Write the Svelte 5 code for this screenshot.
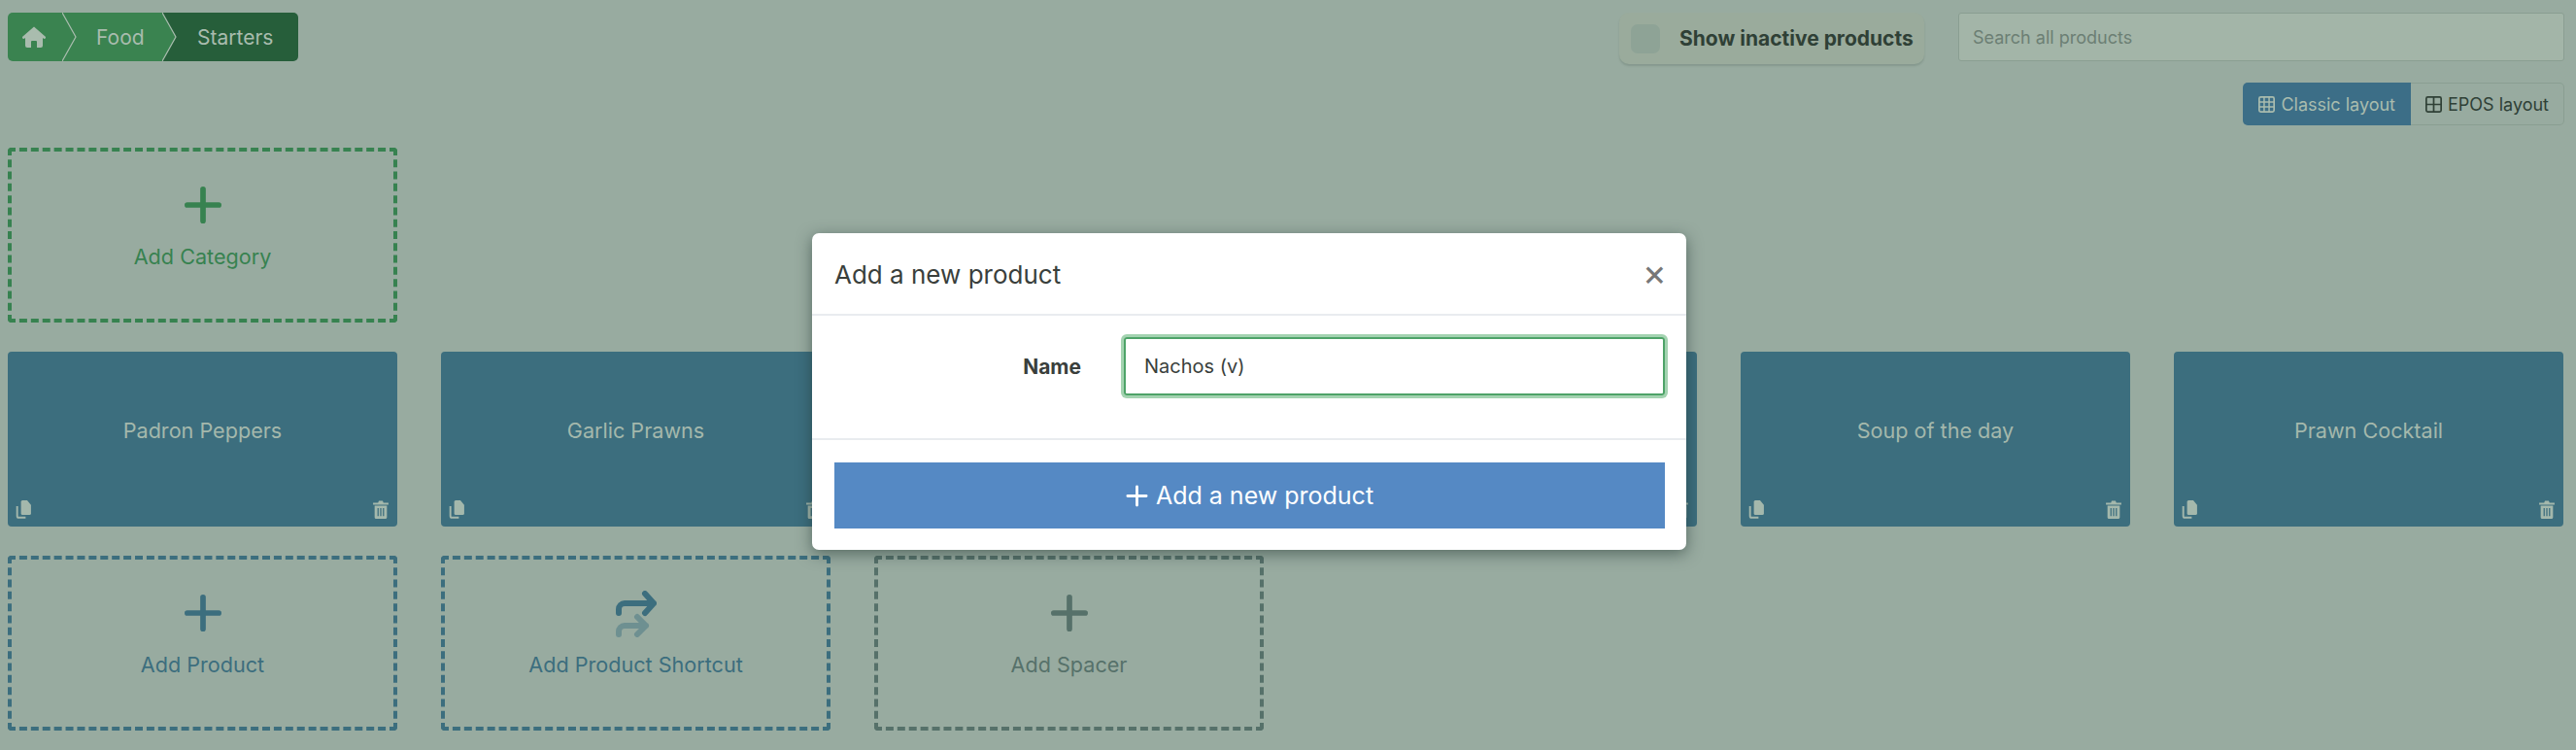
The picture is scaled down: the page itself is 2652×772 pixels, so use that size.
<script>
  const products = ["Padron Peppers", "Garlic Prawns", "", "", "Soup of the day", "Prawn Cocktail"];
</script>

{#snippet plus()}
  <svg class="big-icon" viewBox="0 0 40 40" aria-hidden="true">
    <path d="M20 3v34M3 20h34" fill="none" stroke="currentColor" stroke-width="6" stroke-linecap="round" />
  </svg>
{/snippet}

{#snippet grid(cols)}
  <svg class="grid-icon" viewBox="0 0 16 16" aria-hidden="true">
    <rect x="0.8" y="0.8" width="14.4" height="14.4" rx="1.5" fill="none" stroke="currentColor" stroke-width="1.6" />
    {#if cols === 3}
      <path d="M5.6 1v14M10.4 1v14M1 5.6h14M1 10.4h14" stroke="currentColor" stroke-width="1.4" />
    {:else}
      <path d="M8 1v14M1 8h14" stroke="currentColor" stroke-width="1.6" />
    {/if}
  </svg>
{/snippet}

<div class="page">
  <div class="top">
    <nav class="crumbs">
      <div class="crumb home">
        <svg class="home-icon" viewBox="0 0 24 22" aria-hidden="true">
          <path fill="currentColor" d="M12 .5L23.5 10.500a1.300 1.300 0 0 1-1.800 2L21 12v8a2 2 0 0 1-2 2h-4v-6a1 1 0 0 0-1-1h-4a1 1 0 0 0-1 1v6H5a2 2 0 0 1-2-2v-8l-.7.5a1.300 1.300 0 0 1-1.800-2z" />
        </svg>
        <svg class="chevron" viewBox="0 0 15 50" aria-hidden="true">
          <path d="M0 0L14 25L0 50Z" fill="#3a8350" />
          <path d="M0 0L14 25L0 50" fill="none" stroke="#a9bcae" stroke-width="1.2" />
        </svg>
      </div>
      <div class="crumb food">
        Food
        <svg class="chevron" viewBox="0 0 15 50" aria-hidden="true">
          <path d="M0 0L14 25L0 50Z" fill="#3a8350" />
          <path d="M0 0L14 25L0 50" fill="none" stroke="#a9bcae" stroke-width="1.2" />
        </svg>
      </div>
      <div class="crumb current">Starters</div>
    </nav>

    <div class="filters">
      <label class="inactive">
        <span class="check"></span>
        <span>Show inactive products</span>
      </label>
      <div class="search">Search all products</div>
    </div>
  </div>

  <div class="layouts">
    <button class="active">{@render grid(3)} Classic layout</button>
    <button>{@render grid(2)} EPOS layout</button>
  </div>

  <div class="grid category-row">
    <div class="add green">
      {@render plus()}
      <span>Add Category</span>
    </div>
  </div>

  <div class="grid product-row">
    {#each products as name}
      <div class="tile">
        <span class="tile-name">{name}</span>
        <div class="tile-tools">
          <svg viewBox="0 0 20 24" aria-hidden="true">
            <path fill="currentColor" d="M9 0h6l5 6v11a2 2 0 0 1-2 2H9a2 2 0 0 1-2-2V2a2 2 0 0 1 2-2z" />
            <path fill="none" stroke="currentColor" stroke-width="2.4" d="M2 7.5v13a2 2 0 0 0 2 2h9" />
          </svg>
          <svg viewBox="0 0 20 24" aria-hidden="true">
            <path fill="currentColor" d="M0 3h6.5l1-2.5h5l1 2.500H20v2.600H0zM2 7h16v15a2 2 0 0 1-2 2H4a2 2 0 0 1-2-2z" />
            <path d="M6.500 10v10.500M10 10v10.500M13.500 10v10.500" stroke="#3c6e7e" stroke-width="1.600" />
          </svg>
        </div>
      </div>
    {/each}
  </div>

  <div class="grid add-row">
    <div class="add blue">
      {@render plus()}
      <span>Add Product</span>
    </div>
    <div class="add blue">
      <svg class="shortcut" viewBox="0 0 42 48" aria-hidden="true">
        <path d="M3 23v-4a6 6 0 0 1 6-6h30M30 3l9 10-9 10" fill="none" stroke="currentColor" stroke-width="6" stroke-linecap="round" stroke-linejoin="round" />
        <path d="M3 45v-3a6 6 0 0 1 6-6h22M22 27l9 9-9 9" fill="none" stroke="currentColor" stroke-opacity="0.45" stroke-width="6" stroke-linecap="round" stroke-linejoin="round" />
      </svg>
      <span>Add Product Shortcut</span>
    </div>
    <div class="add grey">
      {@render plus()}
      <span>Add Spacer</span>
    </div>
  </div>
</div>

<div class="modal">
  <header>
    <h2>Add a new product</h2>
    <span class="close">×</span>
  </header>
  <div class="modal-body">
    <span class="field-label">Name</span>
    <div class="field">Nachos (v)</div>
  </div>
  <footer>
    <button class="submit">
      <svg viewBox="0 0 24 24" aria-hidden="true">
        <path d="M12 2v20M2 12h20" fill="none" stroke="currentColor" stroke-width="3" stroke-linecap="round" />
      </svg>
      Add a new product
    </button>
  </footer>
</div>

<style>
  :global(body) {
    background: #98aba0;
    font-family: Inter, "Liberation Sans", sans-serif;
    overflow: hidden;
  }

  .page {
    height: 772px;
    padding: 13px 12px 0 8px;
    box-sizing: border-box;
  }

  .top {
    display: flex;
    justify-content: space-between;
    align-items: flex-start;
  }

  .crumbs {
    display: flex;
    width: 299px;
    height: 50px;
    font-size: 21px;
    color: #a9bcae;
  }

  .crumb {
    position: relative;
    display: flex;
    align-items: center;
    box-sizing: border-box;
    background: #3a8350;
  }

  .home {
    width: 56px;
    padding-left: 15px;
    border-radius: 5px 0 0 5px;
  }

  .home-icon {
    width: 24px;
    height: 22px;
  }

  .food {
    width: 103px;
    padding-left: 35px;
  }

  .current {
    width: 140px;
    padding-left: 36px;
    background: #265e3a;
    border-radius: 0 5px 5px 0;
  }

  .chevron {
    position: absolute;
    left: 100%;
    top: 0;
    width: 15px;
    height: 50px;
    z-index: 1;
  }

  .filters {
    display: flex;
    gap: 35px;
  }

  .inactive {
    display: flex;
    align-items: center;
    gap: 20px;
    width: 314px;
    height: 53px;
    padding-left: 12px;
    box-sizing: border-box;
    background: #9aab9c;
    border-radius: 10px;
    box-shadow: 0 2px 2px rgba(60, 80, 70, 0.2);
    font-size: 21px;
    font-weight: 700;
    color: #2f4036;
  }

  .check {
    width: 30px;
    height: 30px;
    border-radius: 7px;
    background: #8ea396;
  }

  .search {
    display: flex;
    align-items: center;
    width: 624px;
    height: 50px;
    padding-left: 14px;
    box-sizing: border-box;
    background: #a3b5a8;
    border: 1px solid #8a9e92;
    border-radius: 3px;
    font-size: 18px;
    color: #6c7f74;
  }

  .layouts {
    display: flex;
    justify-content: flex-end;
    margin-top: 19px;
  }

  .layouts button {
    display: flex;
    align-items: center;
    gap: 6px;
    height: 44px;
    padding: 0 15px;
    background: #98aba0;
    border: 1px solid #8a9e92;
    border-left: 0;
    border-radius: 0 5px 5px 0;
    font: inherit;
    font-size: 18px;
    color: #2f4036;
  }

  .layouts button.active {
    padding: 0 16px;
    background: #3c6e87;
    border: 0;
    border-radius: 5px 0 0 5px;
    color: #a9bcae;
  }

  .grid-icon {
    width: 17px;
    height: 17px;
  }

  .grid {
    display: grid;
    grid-template-columns: repeat(6, 401px);
    column-gap: 45px;
  }

  .category-row {
    margin-top: 23px;
  }

  .product-row {
    margin-top: 30px;
  }

  .add-row {
    margin-top: 30px;
  }

  .add {
    display: flex;
    flex-direction: column;
    align-items: center;
    height: 180px;
    box-sizing: border-box;
    padding-top: 36px;
    border: 4px dashed currentColor;
    border-radius: 4px;
    font-size: 21.6px;
  }

  .add span {
    margin-top: 21px;
  }

  .green {
    color: #378250;
  }

  .blue {
    color: #3c6e7e;
  }

  .grey {
    color: #56716a;
  }

  .big-icon {
    width: 38px;
    height: 38px;
    flex: none;
  }

  .shortcut {
    width: 42px;
    height: 48px;
    flex: none;
    margin-top: -4px;
    margin-bottom: -6px;
  }

  .tile {
    position: relative;
    display: flex;
    justify-content: center;
    height: 180px;
    padding-top: 68px;
    box-sizing: border-box;
    background: #3c6e7e;
    border-radius: 4px;
    font-size: 21.6px;
    color: #a4b8ac;
  }

  .tile-tools {
    position: absolute;
    left: 8px;
    right: 9px;
    bottom: 8px;
    display: flex;
    justify-content: space-between;
  }

  .tile-tools svg {
    width: 16px;
    height: 19px;
  }

  .modal {
    position: absolute;
    left: 836px;
    top: 240px;
    width: 900px;
    height: 326px;
    background: #fff;
    border-radius: 7px;
    box-shadow: 0 4px 16px rgba(30, 50, 45, 0.55);
    color: #3a3f3c;
    font-size: 21px;
  }

  header {
    display: flex;
    justify-content: space-between;
    height: 85px;
    box-sizing: border-box;
    padding: 0 23px;
    border-bottom: 2px solid #e9ecef;
  }

  h2 {
    margin: 26px 0 0;
    font-size: 26px;
    line-height: 34px;
    font-weight: 400;
  }

  .close {
    margin: 19px -3px 0 0;
    font-size: 38px;
    line-height: 42px;
    font-weight: 400;
    color: #777;
  }

  .modal-body {
    display: flex;
    align-items: center;
    height: 128px;
    box-sizing: border-box;
    padding: 0 22px 22px 0;
    border-bottom: 2px solid #e9ecef;
  }

  .field-label {
    width: 277px;
    text-align: right;
    font-weight: 700;
    font-size: 21px;
  }

  .field {
    display: flex;
    align-items: center;
    box-sizing: border-box;
    width: 557px;
    height: 60px;
    margin-left: 44px;
    padding-left: 19px;
    border: 2px solid #4ea368;
    border-radius: 3px;
    box-shadow: 0 0 0 3px #a3d3b0;
    font-size: 20px;
  }

  footer {
    padding: 23px 22px 0 23px;
  }

  .submit {
    display: flex;
    align-items: center;
    justify-content: center;
    gap: 8px;
    width: 100%;
    height: 68px;
    background: #5589c4;
    border: 0;
    font: inherit;
    font-size: 25px;
    color: #fff;
  }

  .submit svg {
    width: 23px;
    height: 23px;
  }
</style>
